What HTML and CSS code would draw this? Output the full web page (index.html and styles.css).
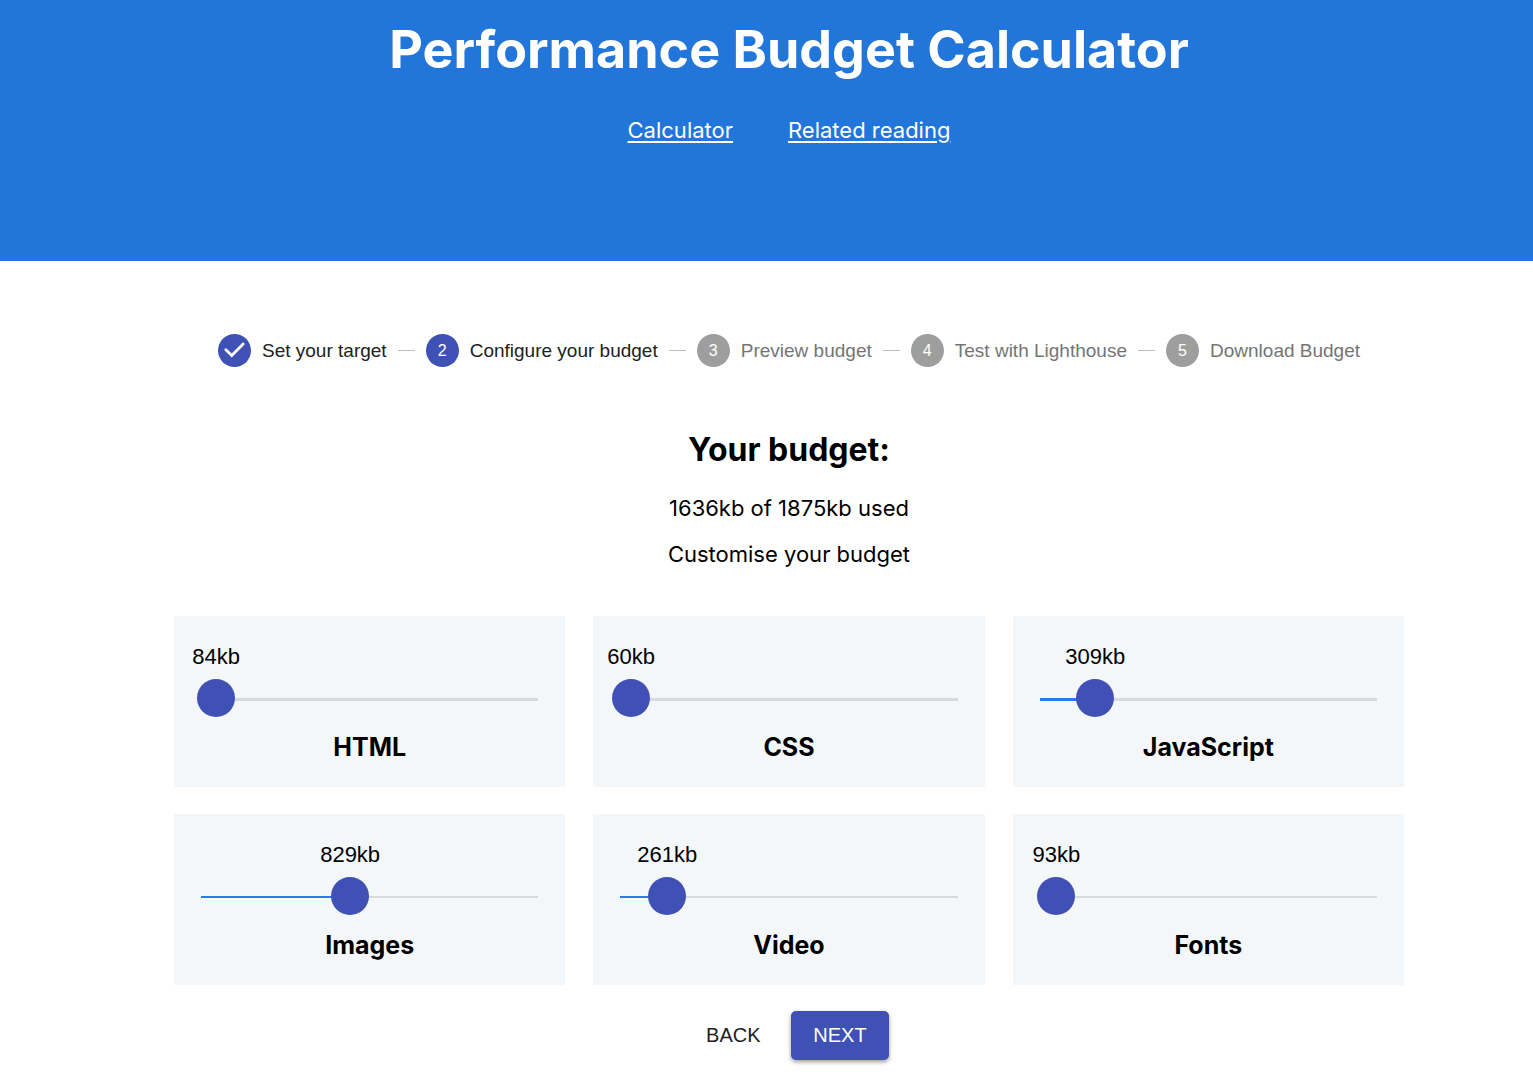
FILE: index.html
```html
<!DOCTYPE html>
<html lang="en">
<head>
  <meta charset="UTF-8">
  <meta name="viewport" content="width=device-width, initial-scale=1.0">
  <title>Performance Budget Calculator</title>
  <link rel="stylesheet" href="styles.css">
</head>
<body>

<header class="header">
  <h1>Performance Budget Calculator</h1>
  <nav class="nav">
    <a href="#calculator">Calculator</a>
    <a href="#reading">Related reading</a>
  </nav>
</header>

<main class="main" id="calculator">
  <!-- Stepper -->
  <ol class="stepper">
    <li class="step active">
      <span class="step-icon">
        <svg viewBox="0 0 24 24" aria-hidden="true"><path d="M5.7 11.4L10 15.6l8.3-8.3" fill="none" stroke="#fff" stroke-width="2" stroke-linecap="round"/></svg>
      </span>
      Set your target
    </li>
    <li class="connector"></li>
    <li class="step active"><span class="step-icon">2</span>Configure your budget</li>
    <li class="connector"></li>
    <li class="step"><span class="step-icon">3</span>Preview budget</li>
    <li class="connector"></li>
    <li class="step"><span class="step-icon">4</span>Test with Lighthouse</li>
    <li class="connector"></li>
    <li class="step"><span class="step-icon">5</span>Download Budget</li>
  </ol>

  <section class="summary">
    <h2>Your budget:</h2>
    <p>1636kb of 1875kb used</p>
    <p>Customise your budget</p>
  </section>

  <!-- Sliders, --value is the share of the total budget -->
  <section class="budget">
    <div class="card" style="--value: 4.48%">
      <output class="amount" for="html">84kb</output>
      <input class="slider" type="range" id="html" min="0" max="1875" value="84">
      <label class="card-title" for="html">HTML</label>
    </div>
    <div class="card" style="--value: 3.2%">
      <output class="amount" for="css">60kb</output>
      <input class="slider" type="range" id="css" min="0" max="1875" value="60">
      <label class="card-title" for="css">CSS</label>
    </div>
    <div class="card" style="--value: 16.48%">
      <output class="amount" for="javascript">309kb</output>
      <input class="slider" type="range" id="javascript" min="0" max="1875" value="309">
      <label class="card-title" for="javascript">JavaScript</label>
    </div>
    <div class="card media" style="--value: 44.21%">
      <output class="amount" for="images">829kb</output>
      <input class="slider" type="range" id="images" min="0" max="1875" value="829">
      <label class="card-title" for="images">Images</label>
    </div>
    <div class="card media" style="--value: 13.92%">
      <output class="amount" for="video">261kb</output>
      <input class="slider" type="range" id="video" min="0" max="1875" value="261">
      <label class="card-title" for="video">Video</label>
    </div>
    <div class="card media" style="--value: 4.96%">
      <output class="amount" for="fonts">93kb</output>
      <input class="slider" type="range" id="fonts" min="0" max="1875" value="93">
      <label class="card-title" for="fonts">Fonts</label>
    </div>
  </section>

  <div class="actions">
    <button type="button" class="btn">BACK</button>
    <button type="button" class="btn btn-primary">NEXT</button>
  </div>
</main>

<script>
  document.querySelectorAll('.slider').forEach(slider => {
    slider.addEventListener('input', () => {
      const card = slider.closest('.card');
      card.style.setProperty('--value', slider.value / slider.max * 100 + '%');
      card.querySelector('.amount').textContent = slider.value + 'kb';
    });
  });
</script>

</body>
</html>
```
FILE: styles.css
```css
* {
  margin: 0;
  padding: 0;
  box-sizing: border-box;
}

body {
  font-family: Inter, sans-serif;
  font-size: 22px;
  line-height: 30px;
  background: #fff;
  color: #000;
}

.header,
.main {
  padding-left: 174px;
  padding-right: 129px;
}

.header {
  background: #2275d9;
  color: #fff;
  text-align: center;
  padding-top: 17px;
  padding-bottom: 116px;
}

.header h1 {
  font-size: 52px;
  line-height: 66px;
  font-weight: 700;
}

.nav {
  display: flex;
  justify-content: center;
  gap: 55px;
  margin-top: 32px;
}

.nav a {
  color: #fff;
  text-underline-offset: 3px;
}

.stepper {
  display: flex;
  align-items: center;
  list-style: none;
  padding: 73px 33px 0;
  font-family: "Liberation Sans", Arial, sans-serif;
  font-size: 19px;
  line-height: 33px;
}

.step {
  display: flex;
  align-items: center;
  gap: 11px;
  padding: 0 11px;
  color: #757575;
  white-space: nowrap;
}

.step:first-child {
  padding-left: 11px;
}

.step.active {
  color: #212121;
}

.step-icon {
  width: 33px;
  height: 33px;
  border-radius: 50%;
  background: #9e9e9e;
  color: #fff;
  font-size: 16px;
  text-align: center;
}

.step.active .step-icon {
  background: #3f51b5;
}

.step-icon svg {
  display: block;
}

.connector {
  flex: 1;
  height: 1px;
  background: #bdbdbd;
}

.summary {
  text-align: center;
  padding-top: 60px;
}

.summary h2 {
  font-size: 32px;
  line-height: 46px;
  font-weight: 700;
  margin-bottom: 20px;
}

.summary p {
  margin-bottom: 16px;
}

.budget {
  display: grid;
  grid-template-columns: repeat(3, 1fr);
  gap: 27px 28px;
  margin-top: 47px;
}

.card {
  --track: 3px;
  display: flex;
  flex-direction: column;
  background: #f3f7fa;
  padding: 26px 27px 22px;
}

.card.media {
  --track: 2px;
}

.amount {
  display: flex;
  justify-content: center;
  width: 0;
  margin-left: var(--value);
  white-space: nowrap;
  font-family: "Liberation Sans", Arial, sans-serif;
}

/* the thumb overhangs the track by half its width on both ends */
.slider {
  appearance: none;
  -webkit-appearance: none;
  height: 38px;
  margin: 7px -19px 12px;
  background:
    linear-gradient(to right, #2979f2 var(--value), #d5dade var(--value))
    center 19px / calc(100% - 38px) var(--track) no-repeat;
  cursor: pointer;
}

.slider::-webkit-slider-thumb {
  -webkit-appearance: none;
  width: 38px;
  height: 38px;
  border-radius: 50%;
  background: #3f51b5;
}

.slider::-moz-range-thumb {
  width: 38px;
  height: 38px;
  border: 0;
  border-radius: 50%;
  background: #3f51b5;
}

.card-title {
  font-size: 25px;
  line-height: 36px;
  font-weight: 700;
  text-align: center;
}

.actions {
  display: flex;
  justify-content: center;
  gap: 14px;
  padding: 26px 0 14px;
}

.btn {
  min-width: 88px;
  padding: 8px 11px;
  border: 0;
  border-radius: 5px;
  background: none;
  color: #212121;
  font-family: "Liberation Sans", Arial, sans-serif;
  font-size: 20px;
  line-height: 33px;
  cursor: pointer;
}

.btn-primary {
  padding: 8px 22px;
  background: #3f51b5;
  color: #fff;
  box-shadow: 0 2px 4px rgba(0, 0, 0, 0.4);
}
```
